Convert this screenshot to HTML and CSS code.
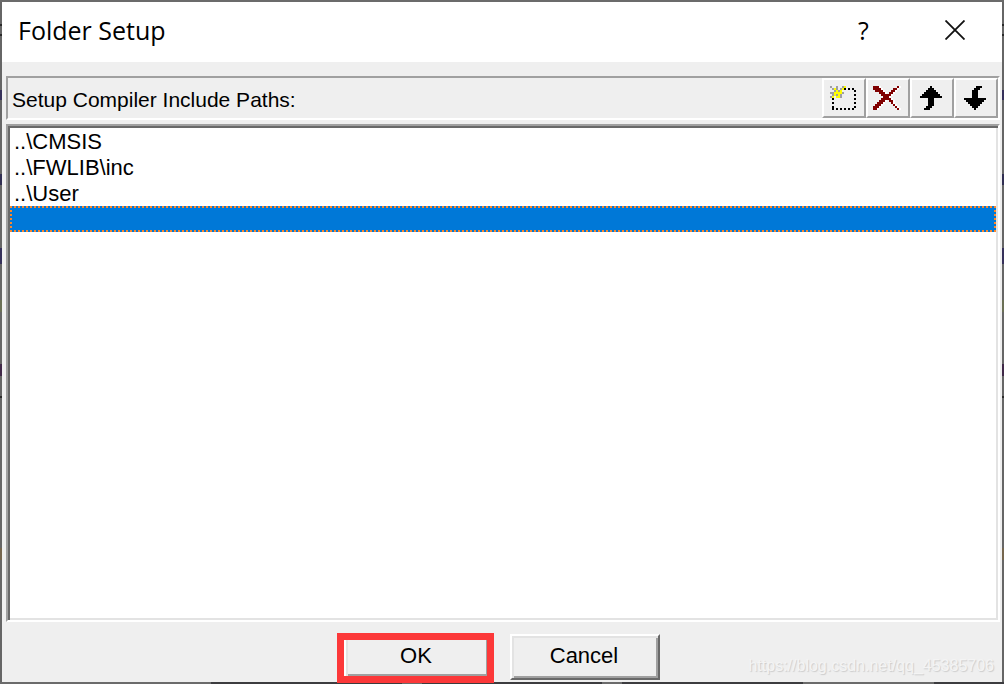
FILE: index.html
```html
<!DOCTYPE html>
<html lang="en">
<head>
    <meta charset="UTF-8">
    <meta name="viewport" content="width=device-width, initial-scale=1.0">
    <title>Folder Setup</title>
    <link rel="stylesheet" href="styles.css">
</head>
<body>
    <main class="dialog">
        <header class="title-bar">
            <h1>Folder Setup</h1>
            <button class="title-button" type="button" aria-label="Help">?</button>
            <button class="title-button" type="button" aria-label="Close">
                <svg width="20" height="20" viewBox="0 0 20 20">
                    <path d="M0.5 0.5 L19.5 19.5 M19.5 0.5 L0.5 19.5" fill="none" stroke="#111" stroke-width="1.8"/>
                </svg>
            </button>
        </header>

        <div class="path-bar">
            <label for="paths">Setup Compiler Include Paths:</label>
            <div class="tools">
                <button class="tool" type="button" aria-label="New">
                    <svg width="26" height="24" viewBox="0 0 13 12" shape-rendering="crispEdges">
                        <path d="M7 1h1v1h-1z M9 1h1v1h-1z M11 1h1v1h-1z M12 2h1v1h-1z M12 4h1v1h-1z M12 6h1v1h-1z M12 8h1v1h-1z M12 10h1v1h-1z M1 6h1v1h-1z M1 8h1v1h-1z M1 10h1v1h-1z M1 11h1v1h-1z M3 11h1v1h-1z M5 11h1v1h-1z M7 11h1v1h-1z M9 11h1v1h-1z M11 11h1v1h-1z" fill="#000"/>
                        <path d="M0 0h1v1h-1z M3 0h1v2h-1z M6 0h1v1h-1z M1 1h1v1h-1z M5 1h1v1h-1z M2 2h1v1h-1z M4 2h1v1h-1z M0 3h2v1h-2z M6 3h1v1h-1z M3 4h1v1h-1z M5 4h1v1h-1z M1 4h1v1h-1z M0 5h1v1h-1z M5 5h1v1h-1z" fill="#a0a0a0"/>
                        <path d="M7 0h1v1h-1z M2 1h1v1h-1z M6 1h1v1h-1z M3 2h1v1h-1z M5 2h1v1h-1z M2 3h4v1h-4z M2 4h1v1h-1z M4 4h1v1h-1z M1 5h1v1h-1z M3 5h2v1h-2z" fill="#ff0"/>
                    </svg>
                </button>
                <button class="tool" type="button" aria-label="Delete">
                    <svg width="28" height="24" viewBox="0 0 14 12" shape-rendering="crispEdges">
                        <defs>
                            <path id="cross" d="M0 0h3v1h-3z M12 0h1v1h-1z M0 1h4v1h-4z M10 1h2v1h-2z M1 2h4v1h-4z M9 2h2v1h-2z M3 3h3v1h-3z M8 3h2v1h-2z M4 4h5v1h-5z M5 5h3v1h-3z M4 6h5v1h-5z M3 7h3v1h-3z M8 7h2v1h-2z M2 8h3v1h-3z M9 8h1v1h-1z M1 9h3v1h-3z M10 9h1v1h-1z M0 10h3v1h-3z M11 10h1v1h-1z M0 11h2v1h-2z M12 11h1v1h-1z"/>
                        </defs>
                        <use href="#cross" x="1" fill="#fff"/>
                        <use href="#cross" fill="#800000"/>
                    </svg>
                </button>
                <button class="tool" type="button" aria-label="Move up">
                    <svg width="22" height="24" viewBox="0 0 11 12" shape-rendering="crispEdges">
                        <path d="M5 0h1v1h1v1h1v1h1v1h1v1h1v1h-4v4h-1v1h-1v1h-3v-1h1v-1h1v-4h-4v-1h1v-1h1v-1h1v-1h1v-1h1z"/>
                    </svg>
                </button>
                <button class="tool" type="button" aria-label="Move down">
                    <svg width="22" height="24" viewBox="0 0 11 12" shape-rendering="crispEdges">
                        <path d="M5 12h1v-1h1v-1h1v-1h1v-1h1v-1h1v-1h-4v-4h1v-1h1v-1h-3v1h-1v1h-1v4h-4v1h1v1h1v1h1v1h1v1h1z"/>
                    </svg>
                </button>
            </div>
        </div>

        <select class="path-list" id="paths" size="4">
            <option>..\CMSIS</option>
            <option>..\FWLIB\inc</option>
            <option>..\User</option>
            <option class="current" aria-label="New path"></option>
        </select>

        <footer class="actions">
            <div class="marked">
                <button class="push default" type="button">OK</button>
            </div>
            <button class="push" type="button">Cancel</button>
            <span class="watermark">https://blog.csdn.net/qq_45385706</span>
        </footer>
    </main>
</body>
</html>
```
FILE: styles.css
```css
:root {
    --face: #efefef;
    --shadow: #a0a0a0;
    --dark: #696969;
    --light: #e3e3e3;
    --select: #0078d7;
}

* {
    box-sizing: border-box;
}

/* desktop that shows around the edge of the dialog */
body {
    margin: 0;
    background:
        linear-gradient(90deg, #6b6b6b 21%, #3c3c3f 21% 40%, #6b6b6b 40% 42%, #3c3c3f 42% 60%, #6b6b6b 60% 62%, #3c3c3f 62% 80%, #6b6b6b 80% 93%, #3c3c3f 93%) bottom / 100% 2px no-repeat,
        linear-gradient(#6b6b6b, #6b6b6b) top / 100% 2px no-repeat,
        linear-gradient(#666 24px, #2a2a2a 24px 26px, #666 26px 34px, #2a2a2a 34px 36px, #666 36px 90px, #35305a 90px 100px, #666 100px 174px, #302e52 174px 185px, #666 185px 248px, #35305a 248px 264px, #666 264px 300px, #6b7055 300px 312px, #666 312px 364px, #402848 364px 376px, #666 376px 396px, #2a2a2a 396px 398px, #666 398px 548px, #75664e 548px 560px, #666 560px);
    font-family: "Liberation Sans", Arial, sans-serif;
    font-size: 22px;
    color: #000;
}

button,
select {
    font: inherit;
    color: inherit;
    border-radius: 0;
}

.dialog {
    display: flex;
    flex-direction: column;
    min-height: 100vh;
    padding: 0 2px;
    border: 2px solid transparent;
    background: var(--face) padding-box;
}

.title-bar {
    display: flex;
    align-items: center;
    height: 60px;
    margin: 0 -2px 14px;
    padding: 0 2px 4px 16px;
    background: #fff;
    font-family: "Open Sans", "Segoe UI", sans-serif;
    font-size: 25px;
}

.title-bar h1 {
    flex: 1;
    margin: 0;
    font-size: 25px;
    font-weight: 400;
}

.title-button {
    display: flex;
    align-items: center;
    justify-content: center;
    width: 91px;
    height: 56px;
    padding: 0;
    border: 0;
    background: none;
}

.path-bar {
    display: flex;
    align-items: center;
    justify-content: space-between;
    height: 44px;
    margin: 0 0 4px 2px;
    padding-left: 4px;
    border: 2px solid;
    border-color: var(--shadow) #fff #fff var(--shadow);
}

.path-bar label {
    padding-top: 4px;
    font-size: 21px;
}

.tools {
    display: flex;
}

.tool {
    display: flex;
    align-items: center;
    justify-content: center;
    width: 44px;
    height: 40px;
    padding: 0 2px 0 0;
    border: 2px solid;
    border-color: #fff var(--shadow) var(--shadow) #fff;
    background: var(--face);
}

.path-list {
    flex: 1;
    margin-left: 2px;
    padding: 2px;
    appearance: none;
    border: 2px solid;
    border-color: var(--shadow) #fff #fff var(--shadow);
    outline: 0;
    background: #fff;
    box-shadow: inset 2px 2px var(--dark), inset -2px -2px var(--light);
    overflow: hidden;
}

.path-list option {
    height: 26px;
    min-height: 26px;
    padding: 1px 4px 0;
    line-height: 26px;
}

.path-list .current {
    border: 2px dotted #ff8728;
    background: var(--select);
}

.actions {
    position: relative;
    display: flex;
    justify-content: center;
    gap: 18px;
    padding: 12px 2px 2px 0;
}

.push {
    width: 150px;
    height: 46px;
    padding: 0 2px 2px 0;
    border: 2px solid;
    border-color: #fff var(--dark) var(--dark) #fff;
    background: var(--face);
    box-shadow: inset 2px 2px var(--light), inset -2px -2px var(--shadow);
}

.marked {
    position: relative;
}

.default {
    border-width: 4px;
}

/* red frame drawn over the OK button */
.marked::after {
    content: "";
    position: absolute;
    inset: -1px -2px -3px -5px;
    border: 7px solid #fc3839;
    pointer-events: none;
}

.watermark {
    position: absolute;
    right: 6px;
    bottom: 7px;
    color: #f4f4f4;
    font-size: 16px;
    text-shadow: 1px 1px 1px #ccc;
}
```
